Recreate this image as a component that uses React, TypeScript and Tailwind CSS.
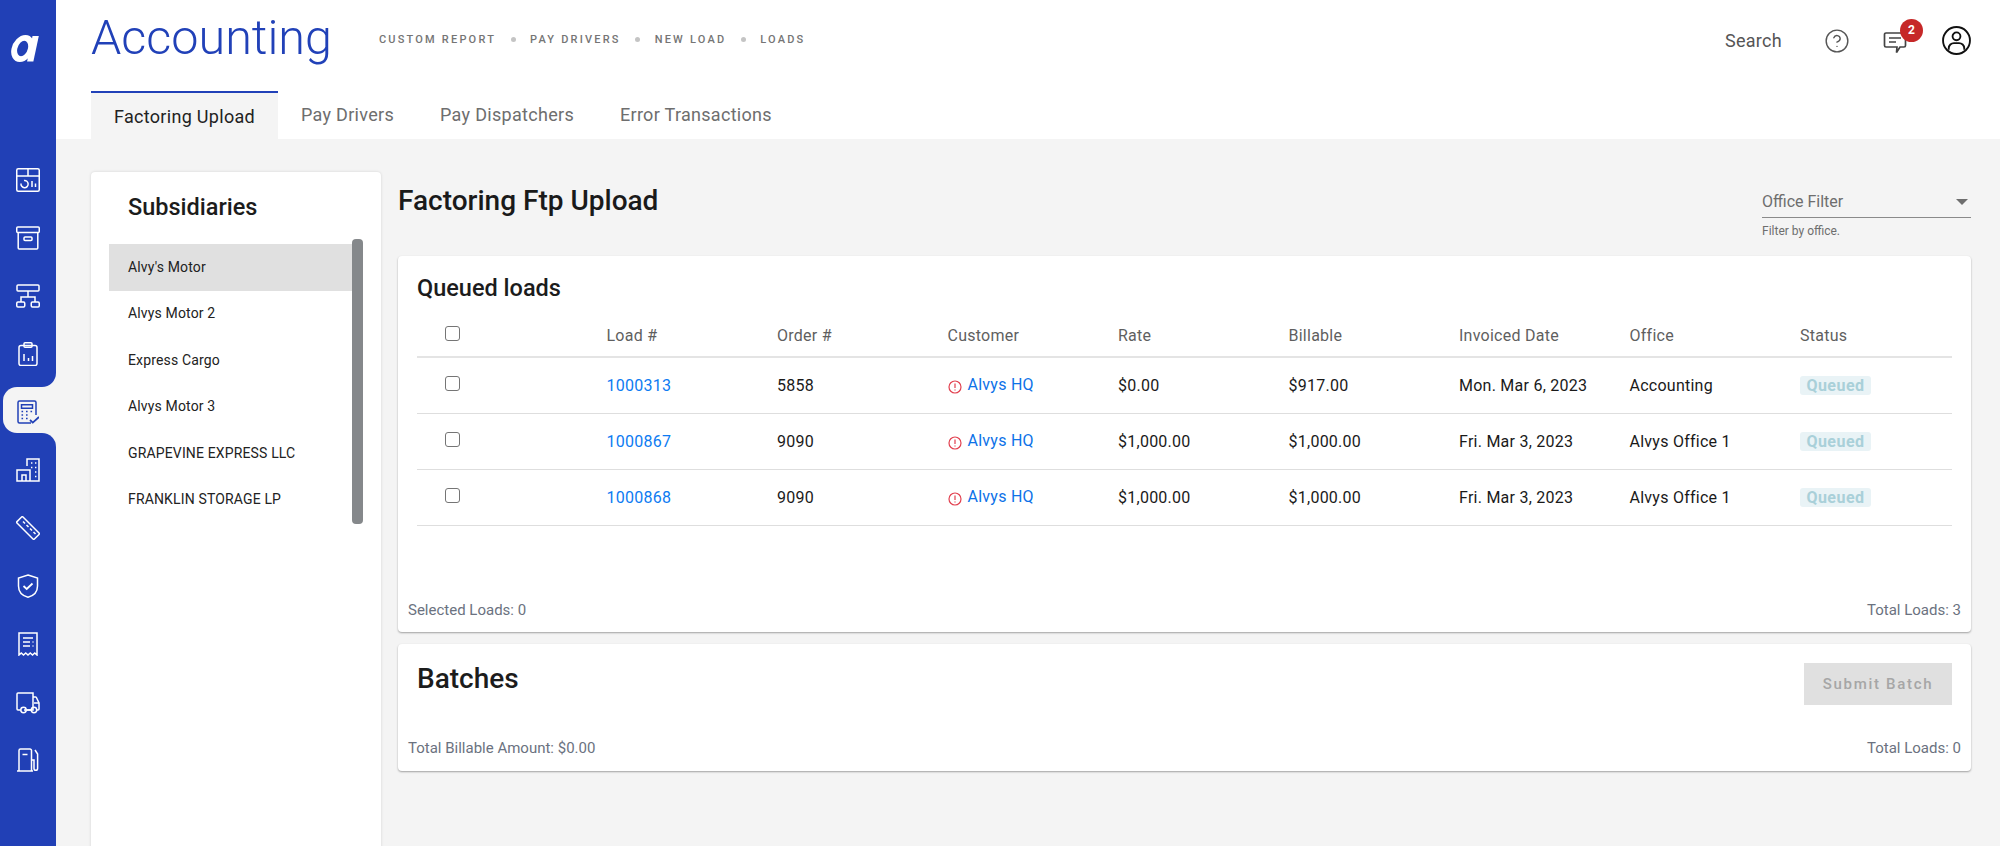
import { CircleHelp } from "lucide-react";
import type { ReactNode } from "react";

const font = { fontFamily: "Roboto, sans-serif" };

const Icon = ({ children, className }: { children: ReactNode; className?: string }) => (
  <svg
    viewBox="0 0 24 24"
    fill="none"
    stroke="currentColor"
    strokeWidth="1.5"
    className={className ?? "w-[24px] h-[24px]"}
  >
    {children}
  </svg>
);

const navIcons = [
  <Icon key="dash">
    <rect x="0.75" y="0.75" width="22.5" height="22.5" rx="1.5" />
    <path d="M1 8h22M12 1v7" />
    <path d="M5 15.5a3.6 3.6 0 1 0 3-3" />
    <path d="M16 13v6M19.5 15.5v3.5" />
  </Icon>,
  <Icon key="archive">
    <rect x="0.75" y="1" width="22.5" height="5.5" rx="1" />
    <path d="M2.2 6.5V22a1 1 0 0 0 1 1h17.6a1 1 0 0 0 1-1V6.5" />
    <rect x="8" y="11" width="8" height="3.4" rx="1" />
  </Icon>,
  <Icon key="sitemap">
    <rect x="1" y="1" width="22" height="6" rx="1" />
    <path d="M12 7v6M5 18v-5h14v5" />
    <rect x="0.75" y="18" width="8" height="5" rx="1.2" />
    <rect x="15.25" y="18" width="8" height="5" rx="1.2" />
  </Icon>,
  <Icon key="clipboard">
    <rect x="3" y="3.5" width="18" height="20" rx="2" />
    <rect x="8" y="0.75" width="8" height="4.5" rx="1" />
    <path d="M8 12v7M12.5 16v3M16.5 14v5" />
  </Icon>,
  <Icon key="calc">
    <path d="M16 23H4.5a1.5 1.5 0 0 1-1.5-1.5v-19A1.5 1.5 0 0 1 4.5 1h15A1.5 1.5 0 0 1 21 2.5V15" />
    <path d="M6.5 4.8h11v3.4h-11z" />
    <path d="M6.5 11.5h1.6M11 11.5h1.6M15.5 11.5h1.6M6.5 15h1.6M11 15h1.6M6.5 18.5h1.6M11 18.5h1.6" />
    <path d="M15 20l2.8 2.6L24 17" strokeWidth="1.8" />
  </Icon>,
  <Icon key="building">
    <path d="M11 8V1h12v22H1V12h13v11" />
    <path d="M6 23v-6h4v6" />
    <path d="M15 5h1.4M19 5h1.4M15 9.5h1.4M19 9.5h1.4M19 14h1.4M19 18.5h1.4" />
  </Icon>,
  <Icon key="ruler">
    <path d="M7 1L23 17a1 1 0 0 1 0 1.4L18.4 23a1 1 0 0 1-1.4 0L1 7a1 1 0 0 1 0-1.4L5.6 1a1 1 0 0 1 1.4 0z" />
    <path d="M7 5.5l2 2M10.5 9l2 2M14 12.5l2 2M17.5 16l2 2" />
  </Icon>,
  <Icon key="shield">
    <path d="M12 1l9.5 3v8c0 6-4 9.8-9.5 11.2C6.5 21.8 2.500 18 2.500 12V4z" />
    <path d="M7.500 12l3.200 3 5.800-5.500" strokeWidth="1.8" />
  </Icon>,
  <Icon key="receipt">
    <path d="M3 1h18v22l-2.250-2-2.250 2-2.250-2-2.250 2-2.250-2-2.250 2-2.250-2L3 23z" />
    <path d="M7 6h10M7 10h7M7 14h7M16.500 10h1M16.500 14h1" />
  </Icon>,
  <Icon key="truck">
    <path d="M4.500 20H2a1 1 0 0 1-1-1V4a1 1 0 0 1 1-1h15v17H11" />
    <path d="M17 7h2.500a1 1 0 0 1 .9.500L23 13v6a1 1 0 0 1-1 1h-1" />
    <path d="M8 20h7M18 13h5" />
    <circle cx="7.500" cy="20" r="2.700" />
    <circle cx="18" cy="20" r="2.700" />
  </Icon>,
  <Icon key="fuel">
    <path d="M3 23V2.500A1.500 1.500 0 0 1 4.500 1h9.500a1.500 1.500 0 0 1 1.500 1.500V23M1 23h16" />
    <path d="M6.500 6.500h5" />
    <path d="M15.500 12h2.500v8.500a1.800 1.800 0 0 0 3.600 0V6l-2.600-4" />
  </Icon>,
];

const tabs = ["Pay Drivers", "Pay Dispatchers", "Error Transactions"];
const crumbs = ["CUSTOM REPORT", "PAY DRIVERS", "NEW LOAD", "LOADS"];
const subsidiaries = [
  "Alvy's Motor",
  "Alvys Motor 2",
  "Express Cargo",
  "Alvys Motor 3",
  "GRAPEVINE EXPRESS LLC",
  "FRANKLIN STORAGE LP",
];
const columns = ["Load #", "Order #", "Customer", "Rate", "Billable", "Invoiced Date", "Office", "Status"];
const loads = [
  { load: "1000313", order: "5858", rate: "$0.00", billable: "$917.00", date: "Mon. Mar 6, 2023", office: "Accounting" },
  { load: "1000867", order: "9090", rate: "$1,000.00", billable: "$1,000.00", date: "Fri. Mar 3, 2023", office: "Alvys Office 1" },
  { load: "1000868", order: "9090", rate: "$1,000.00", billable: "$1,000.00", date: "Fri. Mar 3, 2023", office: "Alvys Office 1" },
];

const rowGrid = "grid grid-cols-[189.5px_repeat(7,170.5px)_1fr] items-center";

const Checkbox = () => (
  <span className="block ml-[28px] mb-[5px] w-[15px] h-[15px] rounded-[3px] border border-[#757575] bg-white" />
);

const Sidebar = () => (
  <aside className="w-[56px] shrink-0 bg-[#2140b6] flex flex-col text-white">
    <div className="h-[157px] pl-[11px] pt-[35px]">
      {/* logo */}
      <svg viewBox="0 0 30 28" className="w-[29px] h-[27px]" fill="none">
        <g transform="skewX(-12)">
          <ellipse cx="15" cy="14" rx="8.500" ry="11" stroke="white" strokeWidth="6" />
          <rect x="22.500" y="1" width="6.500" height="26.500" fill="white" />
        </g>
      </svg>
    </div>
    <div className="flex flex-col gap-[12px] w-full">
      {navIcons.map((icon, i) =>
        i === 4 ? (
          <div key={i} className="h-[46px]">
            <div className="relative h-[46px] ml-[3px] -mt-[2px] flex items-center pl-[12px] pt-[4px] bg-[#f4f4f4] text-[#2140b6] rounded-l-[14px]">
              <span className="absolute right-0 -top-[14px] w-[14px] h-[14px] bg-[#f4f4f4]">
                <span className="block w-full h-full bg-[#2140b6] rounded-br-[14px]" />
              </span>
              <span className="absolute right-0 -bottom-[14px] w-[14px] h-[14px] bg-[#f4f4f4]">
                <span className="block w-full h-full bg-[#2140b6] rounded-tr-[14px]" />
              </span>
              {icon}
            </div>
          </div>
        ) : (
          <div key={i} className="h-[46px] flex items-center justify-center">
            {icon}
          </div>
        )
      )}
    </div>
  </aside>
);

const Header = () => (
  <header className="h-[139px] shrink-0 bg-white pl-[35px] pr-[29px] flex flex-col justify-between">
    <div className="flex items-start">
      <h1 className="text-[48.500px] leading-[56px] mt-[10px] font-light text-[#2141b8]">Accounting</h1>
      <nav className="ml-[47px] mt-[33px] flex items-center gap-[14.500px] text-[11px] leading-[14px] font-medium tracking-[2.200px] text-[#757575]">
        {crumbs.map((c, i) => (
          <span key={c} className="flex items-center gap-[14.500px]">
            {i > 0 && <span className="w-[5px] h-[5px] rounded-full bg-[#c4c4c4] -mt-[1px]" />}
            {c}
          </span>
        ))}
      </nav>
      <div className="ml-auto mt-[26px] flex items-center text-[#555]">
        <span className="text-[18px] leading-[26px] tracking-[0.3px]">Search</span>
        <CircleHelp className="ml-[42px] w-[26px] h-[26px]" strokeWidth={1.3} />
        <span className="relative ml-[33px] w-[26px] h-[26px]">
          <svg viewBox="0 0 26 26" fill="none" stroke="#444" strokeWidth="1.7" className="w-[26px] h-[26px]">
            <path d="M3 5h18a1.500 1.500 0 0 1 1.500 1.500v11a1.500 1.500 0 0 1-1.500 1.500h-4l-3.500 5.500.5-5.500H3a1.500 1.500 0 0 1-1.500-1.500v-11A1.500 1.500 0 0 1 3 5z" />
            <path d="M6 10h12M6 14h7" />
          </svg>
          <span className="absolute -top-[9px] left-[17px] w-[23px] h-[23px] rounded-full bg-[#c62828] text-white text-[12px] font-bold flex items-center justify-center">
            2
          </span>
        </span>
        <svg viewBox="0 0 28 28" fill="none" stroke="#111" strokeWidth="1.8" className="ml-[33px] w-[29px] h-[29px]">
          <circle cx="14" cy="14" r="13" />
          <circle cx="14" cy="10" r="3.800" />
          <path d="M6.500 23v-1.500c0-3 2.500-5 5-5h5c2.500 0 5 2 5 5V23" />
        </svg>
      </div>
    </div>
    <div className="flex items-end">
      <div className="h-[48px] w-[187px] border-t-2 border-[#2141b8] bg-[#f4f4f4] text-[#222] text-[18px] tracking-[0.3px] flex items-center justify-center pt-[1px]">
        Factoring Upload
      </div>
      <div className="flex gap-[46px] ml-[23px] h-[48px] items-center pb-[2px] text-[18px] tracking-[0.3px] text-[#6e6e6e]">
        {tabs.map((t) => (
          <span key={t}>{t}</span>
        ))}
      </div>
    </div>
  </header>
);

const SubsidiariesPanel = () => (
  <section className="w-[290px] shrink-0 h-[760px] bg-white rounded-t-[4px] shadow-[0_0_3px_rgba(0,0,0,0.14)] pl-[18px] pr-[19px] relative">
    <h2 className="pl-[19px] pt-[19px] h-[72px] text-[23.500px] leading-[32px] font-medium text-[#1c1c1c]">Subsidiaries</h2>
    <ul>
      {subsidiaries.map((s, i) => (
        <li
          key={s}
          className={`h-[46.5px] pl-[19px] flex items-center text-[14px] tracking-[0.15px] text-[#222] ${i === 0 ? "bg-[#e0e0e0]" : ""}`}
        >
          {s}
        </li>
      ))}
    </ul>
    <span className="absolute right-[18px] top-[67px] w-[11px] h-[285px] rounded-[4px] bg-[#85888b]" />
  </section>
);

const QueuedCard = () => (
  <section className="h-[376px] bg-white rounded-[4px] shadow-[0_1px_2px_rgba(0,0,0,0.35)] flex flex-col">
    <h3 className="pl-[19px] pt-[17px] h-[61px] text-[23.500px] leading-[30px] font-medium text-[#1c1c1c]">Queued loads</h3>
    <div className="mx-[19px] text-[16px] tracking-[0.25px]">
      <div className={`${rowGrid} h-[41px] pb-[2px] border-b-2 border-[#e4e4e4] text-[#5f5f5f]`}>
        <Checkbox />
        {columns.map((c) => (
          <span key={c}>{c}</span>
        ))}
      </div>
      {loads.map((l) => (
        <div key={l.load} className={`${rowGrid} h-[56px] border-b border-[#dedede] text-[#1a1a1a]`}>
          <Checkbox />
          <span className="text-[#0d7bf2]">{l.load}</span>
          <span>{l.order}</span>
          <span className="flex items-center text-[#0d72e8]">
            <svg viewBox="0 0 14 14" fill="none" stroke="#e2404f" strokeWidth="1.2" className="w-[14px] h-[14px] mt-[3px] mr-[6px]">
              <circle cx="7" cy="7" r="6" />
              <path d="M7 3.500v4.500M7 9.500v1" />
            </svg>
            <span className="mb-[1px]">Alvys HQ</span>
          </span>
          <span>{l.rate}</span>
          <span>{l.billable}</span>
          <span>{l.date}</span>
          <span>{l.office}</span>
          <span>
            <span className="inline-block w-[71px] text-center leading-[19px] rounded-[3px] bg-[#e9f3f6] text-[#a9d0d9] font-bold tracking-[0.5px]">Queued</span>
          </span>
        </div>
      ))}
    </div>
    <div className="mt-auto px-[10px] pb-[11px] flex justify-between text-[15px] text-[#6b7280]">
      <span>Selected Loads: 0</span>
      <span>Total Loads: 3</span>
    </div>
  </section>
);

const BatchesCard = () => (
  <section className="h-[127px] bg-white rounded-[4px] shadow-[0_1px_2px_rgba(0,0,0,0.35)] flex flex-col">
    <div className="flex justify-between pl-[19px] pr-[19px] pt-[19px]">
      <h3 className="-mt-[2px] text-[28px] leading-[36px] font-medium text-[#1c1c1c]">Batches</h3>
      <button className="w-[148px] h-[42px] bg-[#e0e0e0] text-[#a6a6a6] text-[15px] font-medium tracking-[1.7px]">
        Submit Batch
      </button>
    </div>
    <div className="mt-auto px-[10px] pb-[12px] flex justify-between text-[15px] text-[#6b7280]">
      <span>Total Billable Amount: $0.00</span>
      <span>Total Loads: 0</span>
    </div>
  </section>
);

export default function App() {
  return (
    <div className="flex w-[2000px] h-[846px] overflow-hidden bg-[#f4f4f4]" style={font}>
      <Sidebar />
      <main className="flex-1 min-w-0 flex flex-col">
        <Header />
        <div className="flex gap-[17px] pl-[35px] pr-[29px] pt-[33px]">
          <SubsidiariesPanel />
          <div className="flex-1 min-w-0">
            <div className="h-[84px] flex justify-between">
              <h2 className="text-[28px] leading-[36px] mt-[11px] font-medium text-[#1a1a1a]">Factoring Ftp Upload</h2>
              <div className="w-[209px] mt-[18px]">
                <div className="h-[28px] border-b border-[#8a8a8a] flex justify-between text-[16px] text-[#6e6e6e]">
                  Office Filter
                  <span className="w-0 h-0 mt-[9px] mr-[3px] border-x-[6px] border-x-transparent border-t-[6px] border-t-[#6e6e6e]" />
                </div>
                <p className="text-[12px] leading-[16px] mt-[5px] text-[#6e6e6e]">Filter by office.</p>
              </div>
            </div>
            <QueuedCard />
            <div className="h-[12px]" />
            <BatchesCard />
          </div>
        </div>
      </main>
    </div>
  );
}
